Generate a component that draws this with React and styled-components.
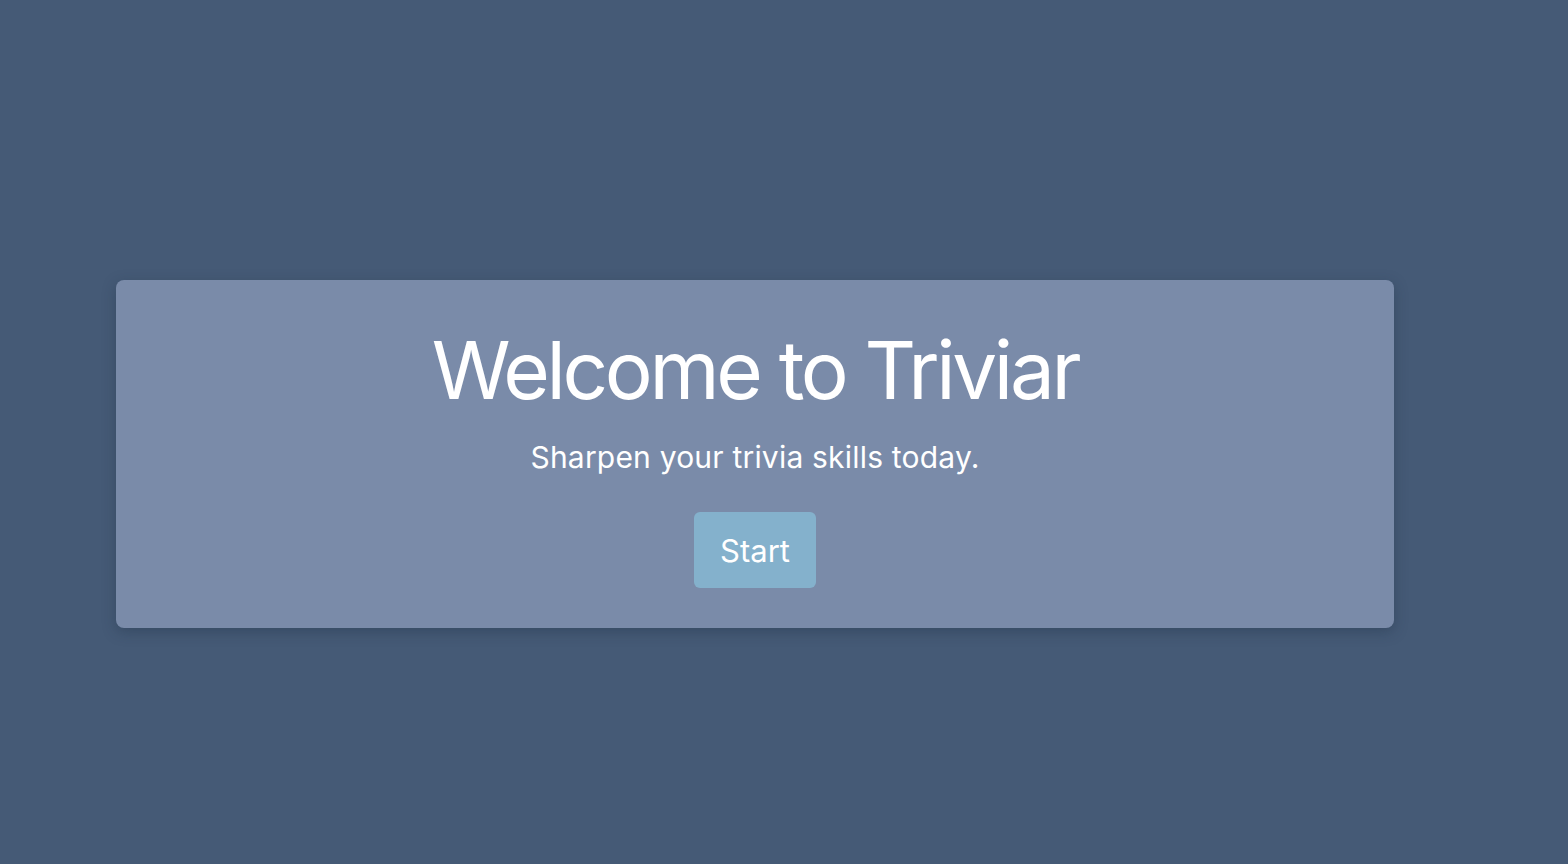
import React from "react";
import styled, { createGlobalStyle } from "styled-components";

const GlobalStyle = createGlobalStyle`
  html, body {
    margin: 0;
    padding: 0;
    background: #455a76;
    font-family: Inter, "Noto Sans", "Liberation Sans", sans-serif;
  }
`;

const Page = styled.main`
  min-height: 100vh;
  box-sizing: border-box;
  padding: 280px 0 0 116px;
`;

const Card = styled.section`
  width: 1278px;
  box-sizing: border-box;
  background: #7a8ba9;
  border-radius: 8px;
  box-shadow: 0 4px 14px rgba(30, 45, 65, 0.35);
  padding: 50px 20px 40px;
  display: flex;
  flex-direction: column;
  align-items: center;
  color: #ffffff;
`;

const Title = styled.h1`
  margin: 0;
  font-size: 80px;
  line-height: 1;
  font-weight: 400;
  letter-spacing: -3.35px;
`;

const Subtitle = styled.p`
  margin: 32px 0 0;
  font-size: 30px;
  line-height: 1;
  font-weight: 400;
  letter-spacing: 0.2px;
`;

const StartButton = styled.button`
  margin-top: 40px;
  height: 76px;
  width: 122px;
  display: flex;
  align-items: center;
  justify-content: center;
  border: none;
  border-radius: 6px;
  background: #84b1cc;
  color: #ffffff;
  font-family: inherit;
  font-size: 31px;
  line-height: 1;
  cursor: pointer;
`;

export default function App() {
  return (
    <>
      <GlobalStyle />
      <Page>
        <Card>
          <Title>Welcome to Triviar</Title>
          <Subtitle>Sharpen your trivia skills today.</Subtitle>
          <StartButton>Start</StartButton>
        </Card>
      </Page>
    </>
  );
}
